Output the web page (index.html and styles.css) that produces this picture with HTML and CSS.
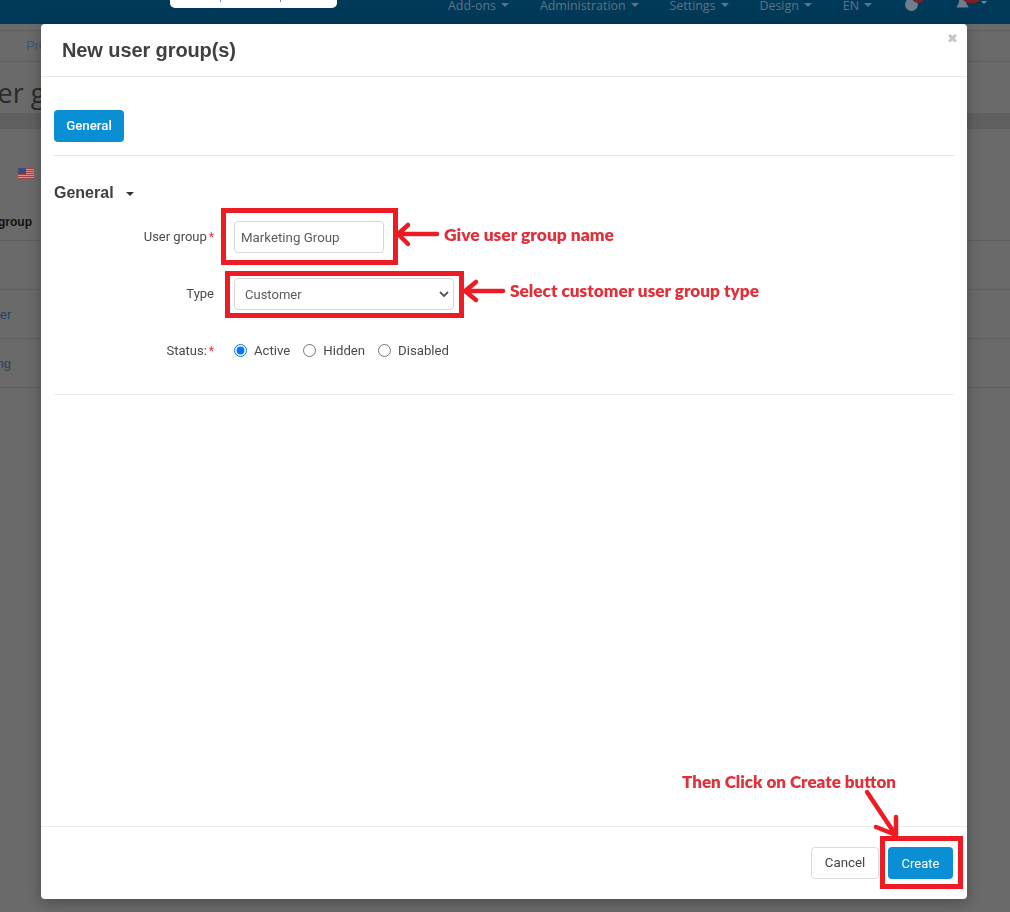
FILE: index.html
```html
<!DOCTYPE html>
<html lang="en">
<head>
<meta charset="utf-8">
<title>New user group(s)</title>
<link rel="stylesheet" href="styles.css">
</head>
<body>
<div class="page">
  <header class="topnav">
    <div class="search"></div>
    <nav class="menu">
      <span class="menu-item caret">Add-ons</span>
      <span class="menu-item caret">Administration</span>
      <span class="menu-item caret">Settings</span>
      <span class="menu-item caret">Design</span>
      <span class="menu-item caret last">EN</span>
      <span class="nav-icon"><span class="dot"></span><span class="badge small"></span></span>
      <span class="nav-icon bell">
        <svg width="13" height="14" viewBox="0 0 13 14"><path d="M6.500 0c2.500 0 3.500 2 3.500 4.500 0 3 2.500 4.500 2.500 6H.5c0-1.500 2.500-3 2.500-6C3 2 4 0 6.500 0z" fill="#6b7f8c"/></svg>
        <span class="badge"></span>
        <span class="bell-caret"></span>
      </span>
    </nav>
  </header>
  <div class="nav-shade"></div>
  <div class="crumbs"><span class="crumb">Products</span></div>
  <div class="titlebar"><span class="page-title">User groups</span></div>
  <div class="page-band"></div>
  <div class="flag-row">
    <svg class="flag" width="16" height="11" viewBox="0 0 16 11"><rect width="16" height="11" fill="#a9a4ac"/><path d="M0 .5h16M0 2.500h16M0 4.500h16M0 6.500h16M0 8.500h16M0 10.500h16" stroke="#9c4646" stroke-width="1"/><rect width="8" height="6" fill="#3c4a80"/></svg>
  </div>
  <div class="bg-row head">User group</div>
  <div class="bg-row"></div>
  <div class="bg-row link customer">Customer</div>
  <div class="bg-row link marketing">Marketing</div>
</div>

<div class="modal">
  <div class="modal-head">
    <h1 class="modal-title">New user group(s)</h1>
    <span class="close">✖</span>
  </div>
  <div class="modal-body">
    <div class="tabs"><span class="tab">General</span></div>
    <div class="section-title"><span>General</span><i class="section-caret"></i></div>
    <form class="form">
      <div class="field field-name">
        <label class="label">User group<b class="req">*</b></label>
        <input class="input" type="text" value="Marketing Group">
      </div>
      <div class="field field-type">
        <label class="label">Type</label>
        <div class="select-wrap">
          <select class="select"><option>Customer</option></select>
          <svg class="chevron" width="10" height="7" viewBox="0 0 10 7" fill="none" stroke="#555" stroke-width="1.800"><path d="M1 1l4 4 4-4"/></svg>
        </div>
      </div>
      <div class="field field-status">
        <label class="label">Status:<b class="req">*</b></label>
        <div class="radios">
          <label class="radio"><input type="radio" name="status" checked>Active</label>
          <label class="radio"><input type="radio" name="status">Hidden</label>
          <label class="radio"><input type="radio" name="status">Disabled</label>
        </div>
      </div>
    </form>
    <div class="end-rule"></div>
  </div>
  <div class="modal-foot">
    <button class="btn btn-cancel" type="button">Cancel</button>
    <button class="btn btn-create" type="button">Create</button>
  </div>
</div>

<div class="mark mark-name"></div>
<div class="mark mark-type"></div>
<div class="mark mark-create"></div>
<svg class="arrows" width="1010" height="912" viewBox="0 0 1010 912" fill="none" stroke="#ed1c24" stroke-width="4.500" stroke-linecap="round" stroke-linejoin="round">
  <path d="M437 234H399M408 225l-10 9 10 10"/>
  <path d="M503 291H465M476 282l-11 9 11 9"/>
  <path d="M867 792l28 42M876 827l20 8 0-18"/>
</svg>
<span class="note note-name">Give user group name</span>
<span class="note note-type">Select customer user group type</span>
<span class="note note-create">Then Click on Create button</span>
</body>
</html>
```
FILE: styles.css
```css
* { box-sizing: border-box; }
html, body { margin: 0; padding: 0; }
body {
  width: 1010px; height: 912px; overflow: hidden; position: relative;
  background: #6a6a6a; font-family: "Liberation Sans", Arial, sans-serif; color: #333;
}
.page { height: 912px; overflow: hidden; }
.topnav {
  height: 24px; background: #003a58; display: flex; position: relative;
  padding-left: 170px; overflow: hidden;
}
.search { width: 167px; height: 8px; background: #fff; border-radius: 0 0 5px 5px; position: relative; }
.search::before, .search::after { content: ""; position: absolute; top: 0; width: 1px; height: 2px; background: #5b8fd6; }
.search::before { left: 50px; }
.search::after { left: 110px; }
.menu {
  display: flex; align-items: flex-end; margin-left: 111px; height: 12px;
  font-family: "Open Sans", sans-serif; font-size: 12.400px; color: #5f7480; line-height: 12px;
}
.menu-item { margin-right: 44px; white-space: nowrap; position: relative; }
.menu-item.last { margin-right: 46px; }
.caret::after {
  content: ""; position: absolute; right: -13px; top: 3px;
  border: 4px solid transparent; border-top: 4px solid #5f7480; border-bottom: 0;
}
.nav-icon { position: relative; width: 13px; height: 12px; margin-right: 38px; flex: none; }
.dot { position: absolute; left: 0; top: -2px; width: 13px; height: 13px; background: #6b7f8c; border-radius: 50%; }
.badge { position: absolute; left: 6px; top: -5px; width: 19px; height: 8px; background: #7d1f26; border-radius: 0 0 7px 7px; }
.badge.small { left: 7px; width: 12px; }
.bell svg { position: absolute; left: 0; top: -3px; }
.bell-caret { position: absolute; left: 25px; top: 1px; border: 3.500px solid transparent; border-top: 3.500px solid #7b8c97; border-bottom: 0; }
.nav-shade { height: 7px; border-bottom: 1px solid #5f5f5f; }
.crumbs { height: 31px; padding: 8px 0 0 26px; font-size: 13px; line-height: 14px; color: #3c5970; border-bottom: 1px solid #5f5f5f; }
.titlebar { height: 51px; position: relative; overflow: hidden; }
.page-title { position: absolute; left: -35px; top: 12px; font-size: 27px; color: #2a2a2a; font-family: "Open Sans", sans-serif; white-space: nowrap; }
.page-band { height: 16px; background: #606060; }
.flag-row { height: 76px; padding: 39px 0 0 18px; }
.flag { display: block; }
.bg-row { height: 49px; border-bottom: 1px solid #5f5f5f; font-size: 13px; line-height: 50px; white-space: nowrap; overflow: hidden; }
.bg-row.head { height: 36px; line-height: 34px; font-size: 12px; font-weight: bold; color: #111; text-indent: -32px; }
.bg-row.link { color: #1d4560; }
.customer { text-indent: -45px; }
.marketing { text-indent: -46px; }

.modal {
  position: fixed; left: 41px; top: 24px; width: 926px; height: 875px;
  background: #fff; border-radius: 4px; box-shadow: 0 3px 14px rgba(0,0,0,.3);
  display: flex; flex-direction: column;
}
.modal-head { height: 53px; border-bottom: 1px solid #e9ecef; padding: 14px 21px; position: relative; }
.modal-title { margin: 0; font-size: 20px; line-height: 24px; font-weight: bold; color: #404040; letter-spacing: -.1px; }
.close { position: absolute; right: 9px; top: 8px; font-size: 13px; line-height: 14px; color: #c4c4c4; }
.modal-body { flex: 1; padding: 33px 13px 0; }
.tabs { height: 46px; border-bottom: 1px solid #e3e3e3; }
.tab {
  display: inline-block; height: 32px; line-height: 31px; width: 70px; text-align: center;
  background: #0a8ed4; color: #fff; border-radius: 4px; font-size: 13.300px;
  font-family: "Roboto", sans-serif; font-weight: 500;
}
.section-title {
  margin-top: 27px; height: 20px; display: flex; align-items: center; gap: 12px;
  font-size: 16px; font-weight: bold; color: #404040;
}
.section-caret { border: 4.500px solid transparent; border-top: 4.500px solid #333; border-bottom: 0; margin-top: 2px; }
.form { margin-top: 18px; }
.field { display: flex; align-items: center; font-family: "Roboto", sans-serif; font-size: 13px; color: #4a4a4a; }
.label { width: 180px; text-align: right; padding-right: 20px; flex: none; }
.field-name .label, .field-type .label { padding-bottom: 2px; }
.req { color: #dc3545; font-weight: normal; margin-left: 2px; font-size: 12px; }
.field-name { height: 32px; }
.input {
  width: 150px; height: 32px; border: 1px solid #d3d8dd; border-radius: 4px; padding: 0 6px;
  font: inherit; font-size: 13.300px; color: #5c5c5c; background: #fff; outline: none;
}
.field-type { margin-top: 25px; height: 32px; }
.select-wrap { position: relative; width: 220px; height: 32px; }
.select {
  width: 220px; height: 32px; border: 1px solid #d3d8dd; border-radius: 4px; padding: 0 10px;
  font: inherit; font-size: 13px; color: #5c5c5c; background: #fff; appearance: none; outline: none;
}
.chevron { position: absolute; right: 5px; top: 13px; pointer-events: none; }
.field-status { margin-top: 29px; height: 22px; }
.radios { display: flex; gap: 13px; font-size: 13.200px; }
.radio { display: flex; align-items: center; gap: 7px; }
.radio input { margin: 0; width: 13px; height: 13px; }
.end-rule { margin-top: 33px; border-top: 1px solid #e9ecef; }
.modal-foot {
  height: 73px; border-top: 1px solid #e9ecef; padding: 20px 14px 0 0;
  display: flex; justify-content: flex-end; align-items: flex-start; gap: 9px;
}
.btn { height: 32px; border-radius: 4px; font-family: "Roboto", sans-serif; font-size: 13px; }
.btn-cancel { width: 68px; background: #fff; border: 1px solid #dcdcdc; color: #444; font-size: 13.300px; padding: 0 0 2px; }
.btn-create { width: 65px; background: #0a8ed4; border: 0; color: #fff; }

.mark { position: absolute; border: 5px solid #ed1c24; }
.mark-name { left: 221px; top: 208px; width: 177px; height: 57px; }
.mark-type { left: 225px; top: 271px; width: 239px; height: 47px; }
.mark-create { left: 880px; top: 836px; width: 83px; height: 53px; }
.arrows { position: absolute; left: 0; top: 0; }
.note { position: absolute; font-family: "Lato", sans-serif; font-weight: 800; font-size: 17.200px; line-height: 20px; color: #e0303a; white-space: nowrap; }
.note-name { left: 444px; top: 225px; font-size: 17.400px; }
.note-type { left: 510px; top: 281px; }
.note-create { left: 682px; top: 772px; font-size: 17px; }
```
